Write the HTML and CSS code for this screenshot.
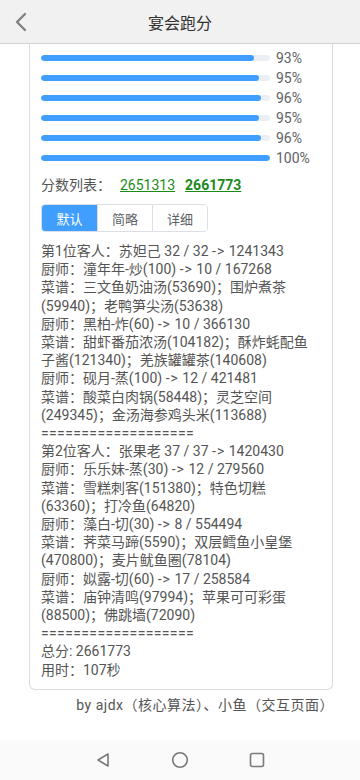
FILE: index.html
```html
<!DOCTYPE html>
<html lang="zh">
<head>
<meta charset="utf-8">
<meta name="viewport" content="width=device-width, initial-scale=1">
<title>宴会跑分</title>
<link rel="stylesheet" href="styles.css">
</head>
<body>
<header class="topbar">
  <span class="back">
    <svg width="14" height="20" viewBox="0 0 14 20"><path d="M11 2 L3 10 L11 18" fill="none" stroke="#808080" stroke-width="2.4" stroke-linecap="round" stroke-linejoin="round"/></svg>
  </span>
  <h1 class="title">宴会跑分</h1>
</header>

<main class="card">
  <div class="bars">
    <div class="bar-row"><div class="track"><div class="fill" style="width:93%"></div></div><span class="pct">93%</span></div>
    <div class="bar-row"><div class="track"><div class="fill" style="width:95%"></div></div><span class="pct">95%</span></div>
    <div class="bar-row"><div class="track"><div class="fill" style="width:96%"></div></div><span class="pct">96%</span></div>
    <div class="bar-row"><div class="track"><div class="fill" style="width:95%"></div></div><span class="pct">95%</span></div>
    <div class="bar-row"><div class="track"><div class="fill" style="width:96%"></div></div><span class="pct">96%</span></div>
    <div class="bar-row"><div class="track"><div class="fill" style="width:100%"></div></div><span class="pct">100%</span></div>
  </div>

  <div class="scores">
    <span class="label">分数列表：</span>
    <a class="score">2651313</a>
    <a class="score best">2661773</a>
  </div>

  <div class="tabs">
    <span class="tab active">默认</span>
    <span class="tab">简略</span>
    <span class="tab">详细</span>
  </div>

  <div class="result">
    <div>第1位客人：苏妲己 32 / 32 <span class="arrow">-&gt;</span> 1241343</div>
    <div>厨师：潼年年-炒(100) <span class="arrow">-&gt;</span> 10 / 167268</div>
    <div>菜谱：三文鱼奶油汤(53690)；围炉煮茶(59940)；老鸭笋尖汤(53638)</div>
    <div>厨师：黑柏-炸(60) <span class="arrow">-&gt;</span> 10 / 366130</div>
    <div>菜谱：甜虾番茄浓汤(104182)；酥炸蚝配鱼子酱(121340)；羌族罐罐茶(140608)</div>
    <div>厨师：砚月-蒸(100) <span class="arrow">-&gt;</span> 12 / 421481</div>
    <div>菜谱：酸菜白肉锅(58448)；灵芝空间(249345)；金汤海参鸡头米(113688)</div>
    <div class="sep">===================</div>
    <div>第2位客人：张果老 37 / 37 <span class="arrow">-&gt;</span> 1420430</div>
    <div>厨师：乐乐妹-蒸(30) <span class="arrow">-&gt;</span> 12 / 279560</div>
    <div>菜谱：雪糕刺客(151380)；特色切糕(63360)；打冷鱼(64820)</div>
    <div>厨师：藻白-切(30) <span class="arrow">-&gt;</span> 8 / 554494</div>
    <div>菜谱：荠菜马蹄(5590)；双层鳕鱼小皇堡(470800)；麦片鱿鱼圈(78104)</div>
    <div>厨师：姒露-切(60) <span class="arrow">-&gt;</span> 17 / 258584</div>
    <div>菜谱：庙钟清鸣(97994)；苹果可可彩蛋(88500)；佛跳墙(72090)</div>
    <div class="sep">===================</div>
    <div>总分: 2661773</div>
    <div>用时：107秒</div>
  </div>
</main>

<footer class="credits">by ajdx（核心算法）、小鱼（交互页面）</footer>

<nav class="sysnav">
  <svg width="16" height="16" viewBox="0 0 16 16"><path d="M13 2 L3 8 L13 14 Z" fill="none" stroke="#7a7a7a" stroke-width="1.6" stroke-linejoin="round"/></svg>
  <svg width="18" height="18" viewBox="0 0 18 18"><circle cx="9" cy="9" r="7.3" fill="none" stroke="#7a7a7a" stroke-width="1.6"/></svg>
  <svg width="16" height="16" viewBox="0 0 16 16"><rect x="1.5" y="1.5" width="13" height="13" rx="2" fill="none" stroke="#7a7a7a" stroke-width="1.6"/></svg>
</nav>
</body>
</html>
```

FILE: styles.css
```css
* { box-sizing: border-box; }

body {
  margin: 0;
  background: #ffffff;
  font-family: Roboto, "Noto Sans CJK SC", sans-serif;
  color: #555;
  font-size: 14px;
}

.topbar {
  height: 44px;
  background: #f1f1f1;
  border-bottom: 1px solid #d2d2d2;
  display: flex;
  align-items: center;
  justify-content: center;
  position: relative;
}

.back {
  position: absolute;
  left: 14px;
  top: 12px;
  display: flex;
}

.title {
  margin: 0;
  font-size: 16px;
  font-weight: 400;
  color: #333;
}

.card {
  margin: 0 27px 0 29px;
  border: 1px solid #dcdcdc;
  border-top: none;
  border-radius: 0 0 6px 6px;
  padding: 4px 11px 10px 11px;
}

.bars {
  display: flex;
  flex-direction: column;
}

.bar-row {
  height: 20px;
  display: flex;
  align-items: center;
  gap: 6px;
}

.track {
  width: 229px;
  height: 6px;
  border-radius: 3px;
  background: #ebeef5;
  overflow: hidden;
}

.fill {
  height: 100%;
  border-radius: 3px;
  background: #409eff;
}

.pct {
  font-size: 14px;
  color: #606266;
  line-height: 20px;
}

.scores {
  margin-top: 7px;
  line-height: 20px;
  display: flex;
  align-items: center;
}

.label { margin-right: 9px; }

.score {
  color: #1a8a1a;
  text-decoration: underline;
  margin-right: 10px;
}

.score.best { font-weight: 700; }

.tabs {
  margin-top: 9px;
  display: inline-flex;
  border: 1px solid #dcdfe6;
  border-radius: 4px;
  overflow: hidden;
  height: 28px;
}

.tab {
  width: 55px;
  display: flex;
  align-items: center;
  justify-content: center;
  font-size: 13px;
  color: #606266;
  border-left: 1px solid #dcdfe6;
  background: #fff;
}

.tab:first-child { border-left: none; }

.tab.active {
  background: #409eff;
  color: #fff;
}

.result {
  margin-top: 10px;
  line-height: 18.2px;
  font-size: 14px;
  color: #555;
}

.arrow { letter-spacing: 1px; }

.sep { letter-spacing: 0.37px; }

.credits {
  margin-top: 5px;
  line-height: 20px;
  text-align: right;
  padding-right: 26px;
  letter-spacing: 0.5px;
  color: #555;
  font-size: 14px;
}

.sysnav {
  position: fixed;
  left: 0;
  right: 0;
  bottom: 0;
  height: 40px;
  background: #fafafa;
  display: flex;
  align-items: center;
  justify-content: center;
  gap: 60px;
}
```
